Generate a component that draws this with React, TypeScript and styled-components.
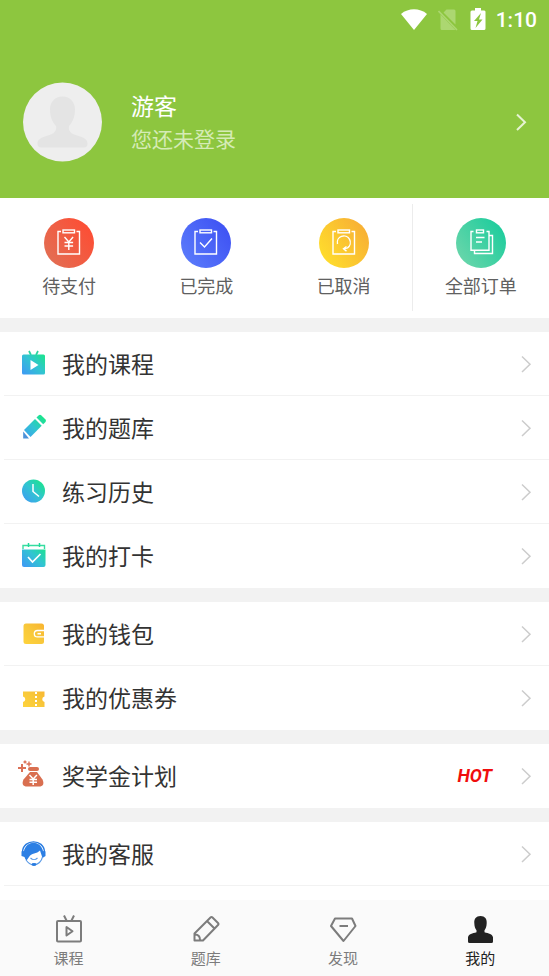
import React from "react";
import styled, { createGlobalStyle } from "styled-components";

const GlobalStyle = createGlobalStyle`
  *, *::before, *::after { box-sizing: border-box; }
  body {
    margin: 0;
    background: #ffffff;
    font-family: "Noto Sans CJK SC", "Noto Sans", sans-serif;
  }
  button { font-family: inherit; border: 0; padding: 0; background: none; cursor: pointer; }
`;

const Page = styled.div`
  display: flex;
  flex-direction: column;
  min-height: 100vh;
`;

const Header = styled.header`
  background: #8dc63f;
  color: #ffffff;
  padding-bottom: 36px;
`;

const StatusBar = styled.div`
  display: flex;
  align-items: center;
  justify-content: flex-end;
  height: 40px;
  padding-right: 12px;
  gap: 10px;
`;

const Clock = styled.time`
  font: 500 21px/24px Roboto, sans-serif;
`;

const Profile = styled.button`
  display: flex;
  align-items: center;
  width: 100%;
  margin-top: 42px;
  padding: 0 22px 0 23px;
  color: inherit;
  text-align: left;
`;

const ProfileText = styled.span`
  display: flex;
  flex-direction: column;
  flex: 1;
  margin-left: 28px;
  padding-bottom: 2px;
  gap: 2px;
`;

const Name = styled.span`
  font-size: 23px;
  line-height: 32px;
`;

const Hint = styled.span`
  font-size: 21px;
  line-height: 30px;
  color: #d5ebb5;
`;

const Orders = styled.nav`
  display: grid;
  grid-template-columns: repeat(4, 1fr);
  padding: 6px 0 7px;
`;

const Order = styled.button<{ $divided?: boolean }>`
  display: flex;
  flex-direction: column;
  align-items: center;
  padding: 14px 0 12px;
  gap: 3px;
  border-left: 1px solid ${(p) => (p.$divided ? "#ececec" : "transparent")};
  color: #606060;
  font-size: 18px;
  line-height: 28px;
`;

const Groups = styled.main`
  display: flex;
  flex-direction: column;
  flex: 1;
`;

const Group = styled.ul`
  list-style: none;
  margin: 0;
  padding: 0;
  border-top: 14px solid #f2f2f2;
`;

const Row = styled.li`
  height: 64px;
  margin-left: 4px;
  border-bottom: 1px solid #f2f2f2;

  ${Group}:not(:last-child) > &:last-child { border-bottom-color: transparent; }
`;

const RowButton = styled.button`
  display: flex;
  align-items: center;
  width: 100%;
  height: 100%;
  padding: 0 17px 0 14px;
  color: #333333;
  font-size: 23px;
  line-height: 34px;
  text-align: left;
`;

const RowLabel = styled.span`
  flex: 1;
  margin-left: 12px;
  padding-bottom: 2px;
`;

const Hot = styled.strong`
  margin-right: 28px;
  color: #f00d0d;
  font: italic 700 18px/24px Roboto, sans-serif;
`;

const TabBar = styled.nav`
  position: sticky;
  bottom: 0;
  display: grid;
  grid-template-columns: repeat(4, 1fr);
  height: 76px;
  background: #fafafa;
`;

const Tab = styled.button<{ $active?: boolean }>`
  display: flex;
  flex-direction: column;
  align-items: center;
  padding-top: 13px;
  color: ${(p) => (p.$active ? "#222222" : "#7c7c7c")};
  font-size: 15px;
  line-height: 24px;
`;

const Svg = styled.svg`
  display: block;
  flex: none;
`;

const Chevron = ({ color, width = 2 }: { color: string; width?: number }) => (
  <Svg width="12" height="20" viewBox="0 0 12 20" fill="none" stroke={color} strokeWidth={width} aria-hidden="true">
    <path d="M2 2.5 10 10.2 2 18" />
  </Svg>
);

const WifiIcon = () => (
  <Svg width="28" height="24" viewBox="0 0 28 24" fill="#fff" aria-hidden="true">
    <path d="M1 6C8.500-.2 19.500-.2 27 6L14 22Z" />
  </Svg>
);

const NoSimIcon = () => (
  <Svg width="22" height="24" viewBox="0 0 22 24" aria-hidden="true">
    <path d="M8.500 1.500H16A1.500 1.500 0 0 1 17.500 3v13.500L5.500 4.500ZM2.500 6.500l15 15.500H4A1.500 1.500 0 0 1 2.500 20.500Z" fill="#acd771" />
    <path d="m.500 3 18.500 19" stroke="#acd771" strokeWidth="1.600" />
  </Svg>
);

const BatteryIcon = () => (
  <Svg width="16" height="24" viewBox="0 0 16 24" aria-hidden="true">
    <path d="M5 0h6v2.500h2.500A1.500 1.500 0 0 1 15.500 4v16.500a1.500 1.500 0 0 1-1.500 1.500h-12A1.500 1.500 0 0 1 .5 20.500V4a1.500 1.500 0 0 1 1.500-1.500H5Z" fill="#fff" />
    <path d="M11 5 4 13h3.500L5.500 20l7-8.500H9Z" fill="#8dc63f" />
  </Svg>
);

const Avatar = () => (
  <Svg width="80" height="80" viewBox="0 0 80 80" role="img" aria-label="头像">
    <circle cx="39.500" cy="40" r="39.500" fill="#eeeeee" />
    <path d="M39.500 14.500c-8 0-12.500 6-12.500 13 0 8 3 13.500 6 16.500 1 5-2 8-8 9.500-7 2-10.500 4-10.500 8 0 2.500 1 4 4 4h42c3 0 4-1.500 4-4 0-4-3.500-6-10.500-8-6-1.500-9-4.500-8-9.500 3-3 6-8.500 6-16.500 0-7-4.500-13-12.500-13Z" fill="#e4e4e4" />
  </Svg>
);

type OrderKind = "pay" | "done" | "cancel" | "all";

const orderColors: Record<OrderKind, [string, string]> = {
  pay: ["#e17055", "#ff4b32"],
  done: ["#5b7cfb", "#3d50f3"],
  cancel: ["#ffe02c", "#f7ac35"],
  all: ["#6dd6ab", "#19cc9c"],
};

const OrderIcon = ({ kind }: { kind: OrderKind }) => (
  <Svg width="50" height="50" viewBox="0 0 50 50" aria-hidden="true">
    <defs>
      <linearGradient id={`order-${kind}`} x1="0" y1="0.850" x2="1" y2="0.150">
        <stop stopColor={orderColors[kind][0]} />
        <stop offset="1" stopColor={orderColors[kind][1]} />
      </linearGradient>
    </defs>
    <circle cx="25" cy="25" r="25" fill={`url(#order-${kind})`} />
    <g fill="none" stroke="#fff" strokeWidth="1.400">
      {kind !== "all" && (
        <>
          <path d="M17 13.500h-3V36h21.500V13.500h-3" />
          <rect x="19" y="12" width="11.500" height="2.800" />
        </>
      )}
      {kind === "pay" && <path d="m20.500 19 4.300 5 4.300-5M24.800 24v8M20.500 24.500h8.600M20.500 28h8.600" />}
      {kind === "done" && <path d="m19 24.500 4.500 4.500 7.500-8.500" />}
      {kind === "cancel" && (
        <>
          <path d="M18.500 26a6.500 6.500 0 1 1 10 3.800l-3.500 1" />
          <path d="m27.500 28.500-3 2.300 3 2.300" />
        </>
      )}
      {kind === "all" && (
        <>
          <path d="M17.500 13.500H15v18.800h18V13.500h-2.500M33 17.500h3.500v18H18.500v-3.200" />
          <rect x="20.500" y="12" width="7" height="2.800" />
          <path d="M20 19.500h8.500M20 24h6" />
        </>
      )}
    </g>
  </Svg>
);

type MenuKind = "course" | "bank" | "history" | "checkin" | "wallet" | "coupon" | "award" | "service";

const MenuIcon = ({ kind }: { kind: MenuKind }) => {
  const warm = kind === "wallet" || kind === "coupon";
  const fill = `url(#menu-${kind})`;
  return (
    <Svg width="32" height="34" viewBox="0 0 32 34" aria-hidden="true">
      <defs>
        <linearGradient id={`menu-${kind}`} gradientUnits="userSpaceOnUse" x1="5" y1="28" x2="27" y2="6">
          <stop stopColor={warm ? "#ffd43b" : "#3f98f5"} />
          <stop offset="0.500" stopColor={warm ? "#f8c83b" : "#32c4d2"} />
          <stop offset="1" stopColor={warm ? "#f9b22e" : "#18e884"} />
        </linearGradient>
      </defs>
      {kind === "course" && (
        <>
          <path d="m11 4 2 4M20 4l-2 4" stroke="#2bd49f" strokeWidth="1.700" />
          <rect x="4" y="7.500" width="23" height="20" rx="1.500" fill={fill} />
          <path d="m12.500 13 8 5-8 5Z" fill="#fff" />
        </>
      )}
      {kind === "bank" && (
        <>
          <path d="m18.500 6.500 2.300-2.300q1.200-1 2.400 0l4.300 4.300q1 1.200 0 2.400l-2.300 2.300Z" fill={fill} />
          <path d="m17 8 6.700 6.700L12.500 26 6 19Z" fill={fill} />
          <path d="m5.200 20.500 5.800 7H5.200Z" fill="#4c91d8" />
        </>
      )}
      {kind === "history" && (
        <>
          <circle cx="15.500" cy="16" r="11.500" fill={fill} />
          <path d="M15 9v7.500l6 5" fill="none" stroke="#fff" strokeWidth="1.500" />
        </>
      )}
      {kind === "checkin" && (
        <>
          <path d="M5 10V6.500h21.500V10" fill="none" stroke="#35dda1" strokeWidth="1.400" />
          <path d="M10.500 4v4M21.500 4v4" stroke="#22d99a" strokeWidth="1.500" />
          <path d="M4 10.500h23.500V26a2 2 0 0 1-2 2H6a2 2 0 0 1-2-2Z" fill={fill} />
          <path d="m10 18 4.500 5 8-8" fill="none" stroke="#fff" strokeWidth="1.700" />
        </>
      )}
      {kind === "wallet" && (
        <>
          <rect x="5.500" y="6.500" width="20.500" height="20.500" rx="2.500" fill={fill} />
          <path d="M26 13.500h-6.500a3.200 3.200 0 0 0 0 6.400H26" fill="none" stroke="#fff" strokeWidth="1.300" />
          <path d="M19.500 16.700H23" stroke="#fff" strokeWidth="1.600" />
        </>
      )}
      {kind === "coupon" && (
        <>
          <path d="M5 10.500h21.500v5a2.800 2.800 0 0 0 0 5.500v5H5v-5a2.800 2.800 0 0 0 0-5.500Z" fill={fill} />
          <path d="M18 11v15" stroke="#fff" strokeWidth="2" strokeDasharray="2 2" />
        </>
      )}
      {kind === "award" && (
        <g fill="#d96f50">
          <path d="M0 9h8M4 5v8" stroke="#db7157" strokeWidth="2" />
          <path d="M5.500 3h3M7 1.500v3M8.500 5h5M11 2.500v5" stroke="#db7157" strokeWidth="1.400" />
          <rect x="10" y="8" width="11" height="4" rx="2" />
          <path d="M12 13h7l5.500 7.500c2 4.500.500 7-3.500 7H9c-4 0-5.500-2.500-3.500-7Z" />
          <path d="m11.500 16 3.700 4 3.700-4M15.200 20v6M11.500 20.500h7.500M11.500 23.200h7.500" fill="none" stroke="#fff" strokeWidth="1.500" />
        </g>
      )}
      {kind === "service" && (
        <>
          <path d="M4.500 15C5 1.500 26 1.500 26.500 15" fill="none" stroke="#287be0" strokeWidth="1.400" />
          <path d="M6 14C8.500 3 22.500 3 25 14l2.500.500v4.500L24.500 21l-2.500-7.500c-3 3.500-9 2.500-11 6.500L8.500 23.500c-1-1-1.500-2-2-3.500l-3-1v-4.500Z" fill="#2c7fe4" />
          <path d="M8 23c3 4 5 5 8 5M24.500 20c-1 4-4 7-8 8M12.500 21c2 2 5 2 7 0" fill="none" stroke="#5a9ae6" strokeWidth="1.100" />
          <ellipse cx="16" cy="27.500" rx="2.500" ry="1.400" fill="#287be0" />
        </>
      )}
    </Svg>
  );
};

type TabKind = "course" | "bank" | "discover" | "mine";

const TabIcon = ({ kind }: { kind: TabKind }) => (
  <Svg width="32" height="33" viewBox="0 0 32 33" fill="none" stroke="currentColor" strokeWidth="2" strokeLinejoin="round" aria-hidden="true">
    {kind === "course" && (
      <>
        <rect x="4" y="8" width="24" height="20.500" rx="1" />
        <path d="m11 2.500 2.500 5M21 2.500 18.500 7.500M13.500 14v8.500l6-4.200Z" />
      </>
    )}
    {kind === "bank" && <path d="M20.500 4.500q1-1 2 0l5.500 5.500q1 1 0 2L13 27.500H4.500V20.500Zm-3.500 3.500 7.500 7.500M5 21.500c3.500 0 5 2 5 5.500" />}
    {kind === "discover" && (
      <>
        <path d="M8 5.500h17l3.500 7.500L16.500 28 4 13Z" />
        <path d="M12.500 13h8.500" />
      </>
    )}
    {kind === "mine" && (
      <path stroke="none" fill="currentColor" d="M16.500 3c-4.500 0-6.500 3-6.200 7 .1 3.500 1 6 2.200 7.300v2c-4 1-8 2-8.500 5V28.500q0 1.500 1.500 1.500h22q1.500 0 1.500-1.500v-4.200c-.500-3-4.500-4-8.500-5v-2c1.200-1.300 2.100-3.800 2.200-7.300.3-4-1.700-7-6.200-7Z" />
    )}
  </Svg>
);

const orders: { kind: OrderKind; label: string }[] = [
  { kind: "pay", label: "待支付" },
  { kind: "done", label: "已完成" },
  { kind: "cancel", label: "已取消" },
  { kind: "all", label: "全部订单" },
];

const groups: { kind: MenuKind; label: string; hot?: boolean }[][] = [
  [
    { kind: "course", label: "我的课程" },
    { kind: "bank", label: "我的题库" },
    { kind: "history", label: "练习历史" },
    { kind: "checkin", label: "我的打卡" },
  ],
  [
    { kind: "wallet", label: "我的钱包" },
    { kind: "coupon", label: "我的优惠券" },
  ],
  [{ kind: "award", label: "奖学金计划", hot: true }],
  [{ kind: "service", label: "我的客服" }],
];

const tabs: { kind: TabKind; label: string }[] = [
  { kind: "course", label: "课程" },
  { kind: "bank", label: "题库" },
  { kind: "discover", label: "发现" },
  { kind: "mine", label: "我的" },
];

export default function App() {
  return (
    <Page>
      <GlobalStyle />
      <Header>
        <StatusBar>
          <WifiIcon />
          <NoSimIcon />
          <BatteryIcon />
          <Clock>1:10</Clock>
        </StatusBar>
        <Profile type="button">
          <Avatar />
          <ProfileText>
            <Name>游客</Name>
            <Hint>您还未登录</Hint>
          </ProfileText>
          <Chevron color="#e6f3d3" />
        </Profile>
      </Header>
      <Orders>
        {orders.map((o) => (
          <Order key={o.kind} type="button" $divided={o.kind === "all"}>
            <OrderIcon kind={o.kind} />
            {o.label}
          </Order>
        ))}
      </Orders>
      <Groups>
        {groups.map((rows) => (
          <Group key={rows[0].kind}>
            {rows.map((r) => (
              <Row key={r.kind}>
                <RowButton type="button">
                  <MenuIcon kind={r.kind} />
                  <RowLabel>{r.label}</RowLabel>
                  {r.hot && <Hot>HOT</Hot>}
                  <Chevron color="#cccccc" width={1.5} />
                </RowButton>
              </Row>
            ))}
          </Group>
        ))}
      </Groups>
      <TabBar>
        {tabs.map((t) => (
          <Tab key={t.kind} type="button" $active={t.kind === "mine"} aria-current={t.kind === "mine" ? "page" : undefined}>
            <TabIcon kind={t.kind} />
            {t.label}
          </Tab>
        ))}
      </TabBar>
    </Page>
  );
}
